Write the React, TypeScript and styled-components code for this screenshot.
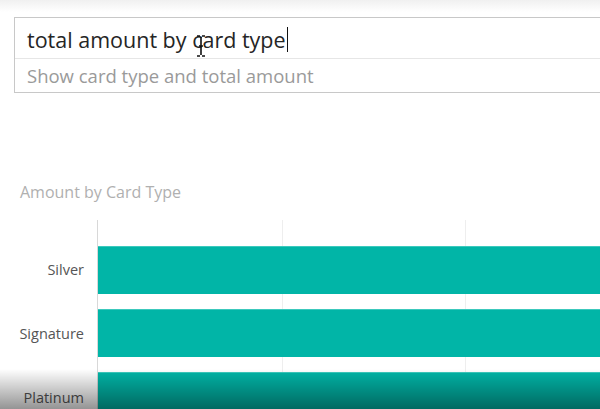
import React from "react";
import styled, { createGlobalStyle } from "styled-components";

const Global = createGlobalStyle`
  html, body { margin: 0; padding: 0; background: #fff; }
  body { font-family: "Open Sans", "Noto Sans", sans-serif; overflow: hidden; }
  #root { width: 600px; height: 409px; }
`;

const Page = styled.div`
  position: relative;
  width: 600px;
  height: 409px;
  overflow: hidden;
  background: #fff;
  padding-top: 17px;
  box-sizing: border-box;
`;

const TopShade = styled.div`
  position: absolute;
  left: 0; right: 0; top: 0; height: 12px;
  background: linear-gradient(#f0f0f0, rgba(255,255,255,0));
  pointer-events: none;
`;

const BottomShade = styled.div`
  position: absolute;
  left: 0; right: 0; bottom: 0; height: 40px;
  background: linear-gradient(rgba(0,0,0,0), rgba(0,0,0,0.42));
  pointer-events: none;
`;

const QueryBox = styled.div`
  margin-left: 14px;
  width: 620px;
  height: 76px;
  border: 1px solid #c8c8c8;
  box-sizing: border-box;
  display: flex;
  flex-direction: column;
`;

const QueryRow = styled.div`
  position: relative;
  height: 41px;
  border-bottom: 1px solid #e6e6e6;
  display: flex;
  align-items: center;
  padding-left: 12px;
  padding-top: 2px;
  box-sizing: border-box;
  font-size: 21.5px;
  color: #252525;
`;

const Caret = styled.span`
  display: inline-block;
  width: 1.5px;
  height: 25px;
  background: #111;
  margin-left: 1px;
`;

const IBeam = styled.svg`
  position: absolute;
  left: 181px;
  top: 17px;
`;

const Suggestion = styled.div`
  flex: 1;
  display: flex;
  align-items: center;
  padding-left: 12px;
  font-size: 18.5px;
  color: #9a9a9a;
`;

const ChartTitle = styled.div`
  margin-top: 89px;
  margin-left: 20px;
  font-size: 16px;
  color: #b0b0b0;
  height: 20px;
  line-height: 20px;
`;

const Chart = styled.div`
  margin-top: 18px;
  display: grid;
  grid-template-columns: 97px 1fr;
  height: 200px;
`;

const Labels = styled.div`
  display: flex;
  flex-direction: column;
  padding-top: 26px;
  padding-right: 13px;
  gap: 16px;
`;

const Label = styled.div`
  height: 48px;
  line-height: 48px;
  text-align: right;
  font-size: 14.5px;
  color: #555;
`;

const Plot = styled.div`
  position: relative;
  border-left: 1.5px solid #d8d8d8;
  display: flex;
  flex-direction: column;
  padding-top: 26px;
  gap: 15px;
`;

const GridLine = styled.div<{ $x: number }>`
  position: absolute;
  top: 0; bottom: 0;
  left: ${(p) => p.$x}px;
  width: 1px;
  background: #eeeeee;
`;

const Bar = styled.div`
  position: relative;
  height: 48px;
  background: #01b5a7;
  border-top: 1px solid #3cc9bd;
  box-sizing: border-box;
`;

const bars = ["Silver", "Signature", "Platinum"];

export default function App() {
  return (
    <>
      <Global />
      <Page>
        <TopShade />
        <QueryBox>
          <QueryRow>
            total amount by card type<Caret />
            <IBeam width="10" height="22" viewBox="0 0 10 22">
              <path d="M1 1 H4 M6 1 H9 M5 2 V20 M1 21 H4 M6 21 H9 M3 11 H7" stroke="#111" strokeWidth="1.6" fill="none" />
            </IBeam>
          </QueryRow>
          <Suggestion>Show card type and total amount</Suggestion>
        </QueryBox>
        <ChartTitle>Amount by Card Type</ChartTitle>
        <Chart>
          <Labels>
            {bars.map((b) => (
              <Label key={b}>{b}</Label>
            ))}
          </Labels>
          <Plot>
            <GridLine $x={184} />
            <GridLine $x={367} />
            {bars.map((b) => (
              <Bar key={b} />
            ))}
          </Plot>
        </Chart>
        <BottomShade />
      </Page>
    </>
  );
}
